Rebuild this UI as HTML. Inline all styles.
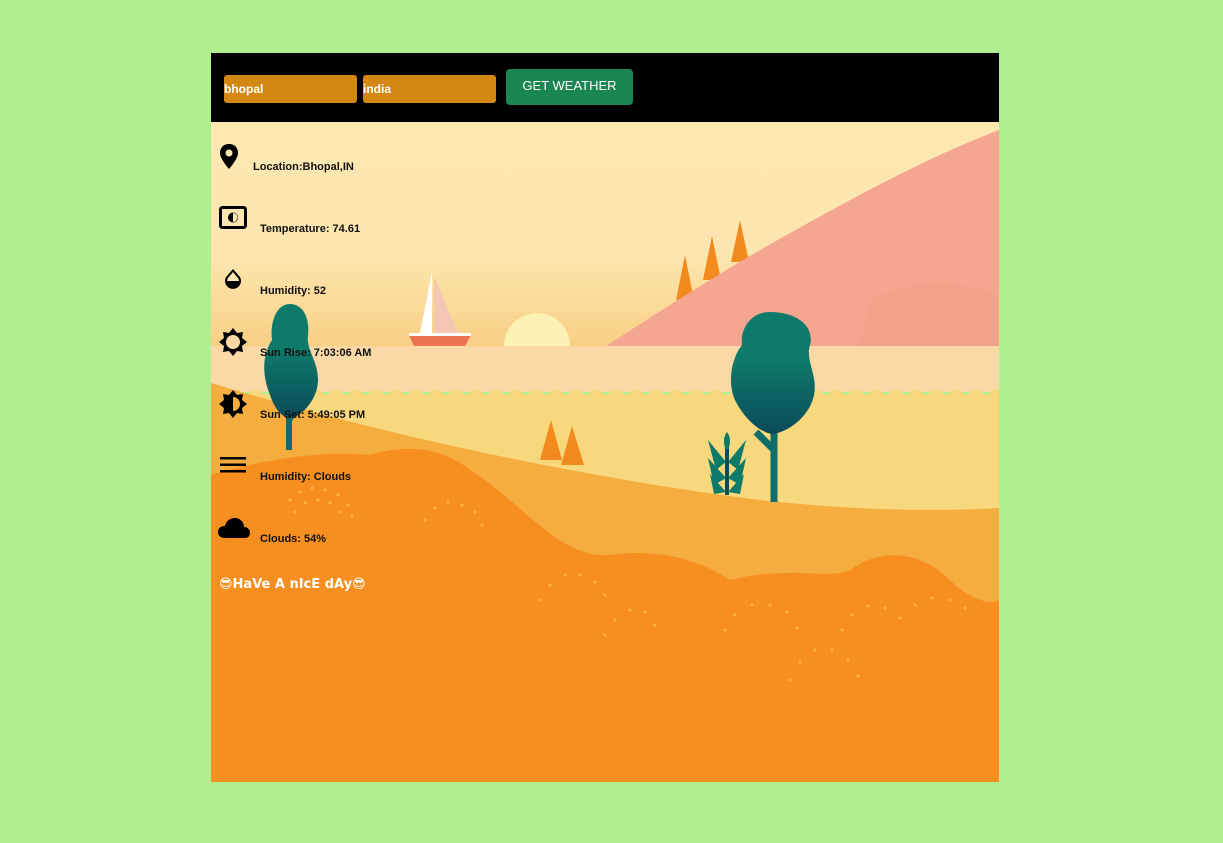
<!DOCTYPE html>
<html><head><style>
body{margin:0;background:#b0ee90;width:1223px;height:843px;overflow:hidden;font-family:"Liberation Sans",sans-serif}
#c{position:absolute;left:211px;top:53px;width:788px;height:729px;overflow:hidden}
#h{position:absolute;left:0;top:0;width:788px;height:69px;background:#000}
.in{position:absolute;top:22px;width:133px;height:28px;background:#d48812;border-radius:3px;color:#fff;font-weight:bold;font-size:12px;line-height:28px}
#btn{position:absolute;left:295px;top:16px;width:127px;height:36px;background:#1a8752;border-radius:4px;color:#fff;font-size:13px;text-align:center;line-height:34px}
svg.bg{position:absolute;left:0;top:69px}
.t{position:absolute;font-size:11px;font-weight:bold;color:#111;white-space:nowrap}
.ic{position:absolute}
#nice{position:absolute;left:8px;top:524px;color:#fff;font-weight:bold;font-size:13px;font-family:"DejaVu Sans",sans-serif;white-space:nowrap}
</style></head><body>
<div id="c">
<div id="h">
<div class="in" style="left:13px">bhopal</div>
<div class="in" style="left:152px">india</div>
<div id="btn">GET WEATHER</div>
</div>
<svg class="bg" width="788" height="660" viewBox="211 122 788 660">
<defs>
<linearGradient id="sky" x1="0" y1="0" x2="0" y2="1"><stop offset="0" stop-color="#fde8b2"/><stop offset="0.6" stop-color="#fde6ae"/><stop offset="1" stop-color="#f9cf85"/></linearGradient>
<linearGradient id="tr" x1="0" y1="0" x2="0" y2="1"><stop offset="0.4" stop-color="#0e7a6a"/><stop offset="1" stop-color="#0b4a5a"/></linearGradient>
</defs>
<rect x="211" y="122" width="788" height="224" fill="url(#sky)"/>
<path d="M676 300 L685 255 L694 300 Z M703 280 L712 236 L721 280 Z M731 262 L740 220 L749 262Z" fill="#f28a1e"/>
<path d="M606 346 C650 318 700 285 760 250 C840 205 920 160 999 130 L999 346 Z" fill="#f4a690"/>
<path d="M870 300 Q930 270 999 295 L999 346 L860 346 Z" fill="#f3a086" opacity=".5"/>
<circle cx="537" cy="346" r="33" fill="#fcf2b6"/>
<rect x="211" y="346" width="788" height="46" fill="#fbd9a6"/>
<path d="M211 392 Q216 387 221 392 T231 392 T241 392 T251 392 T261 392 T271 392 T281 392 T291 392 T301 392 T311 392 T321 392 T331 392 T341 392 T351 392 T361 392 T371 392 T381 392 T391 392 T401 392 T411 392 T421 392 T431 392 T441 392 T451 392 T461 392 T471 392 T481 392 T491 392 T501 392 T511 392 T521 392 T531 392 T541 392 T551 392 T561 392 T571 392 T581 392 T591 392 T601 392 T611 392 T621 392 T631 392 T641 392 T651 392 T661 392 T671 392 T681 392 T691 392 T701 392 T711 392 T721 392 T731 392 T741 392 T751 392 T761 392 T771 392 T781 392 T791 392 T801 392 T811 392 T821 392 T831 392 T841 392 T851 392 T861 392 T871 392 T881 392 T891 392 T901 392 T911 392 T921 392 T931 392 T941 392 T951 392 T961 392 T971 392 T981 392 T991 392 T1001 392 L999 782 L211 782Z" fill="#f8d87c"/>
<path d="M420 333 L432 272 L432 333Z" fill="#fff"/><path d="M434 333 L434 276 L458 333Z" fill="#f6c6b4"/>
<path d="M409 335 L471 335 L465 346 L414 346Z" fill="#ee7352"/><rect x="409" y="333" width="62" height="3" fill="#fff"/>
<path d="M211 383 C400 440 600 480 760 500 C850 510 930 512 999 508 L999 782 L211 782Z" fill="#f6ad40"/>
<path d="M540 460 L551 420 L562 460Z M561 465 L572 426 L584 465Z" fill="#f28a1e"/>
<path d="M211 475 C260 460 320 450 370 455 C400 445 440 445 470 470 C520 500 560 560 610 555 C660 548 700 560 730 580 C790 565 830 580 850 570 C880 548 920 550 950 580 C970 600 990 605 999 600 L999 782 L211 782Z" fill="#f68f1f"/>
<path d="M289 450 L289 380 M289 420 L301 402" stroke="#0f6d6a" stroke-width="6"/>
<path d="M290 304 C275 304 270 325 272 340 C262 355 262 375 270 395 C275 410 283 418 290 418 C300 418 318 400 318 380 C318 360 306 350 308 335 C310 318 303 304 290 304Z" fill="url(#tr)"/>
<path d="M774 502 L774 400 M774 450 L756 432" stroke="#0f6d6a" stroke-width="7"/>
<path d="M770 312 C750 312 740 330 742 345 C730 360 728 385 735 400 C745 420 760 432 772 434 C790 432 810 415 814 395 C818 375 805 360 810 345 C815 325 795 312 770 312Z" fill="url(#tr)"/>
<path d="M727 495 L727 440" stroke="#0b4a5a" stroke-width="4"/>
<path d="M727 432 C722 438 724 448 727 450 C730 448 732 438 727 432Z M708 440 L726 462 L716 470Z M746 440 L728 462 L738 470Z M708 458 L726 478 L714 485Z M746 458 L728 478 L740 485Z M710 474 L726 492 L714 494Z M744 474 L728 492 L740 494Z" fill="#0e7a6a"/>
<g fill="#fbb84a" opacity=".9">
<circle cx="290" cy="500" r="1.5"/><circle cx="300" cy="492" r="1.5"/><circle cx="312" cy="488" r="1.5"/><circle cx="325" cy="490" r="1.5"/><circle cx="338" cy="495" r="1.5"/><circle cx="348" cy="505" r="1.5"/><circle cx="352" cy="516" r="1.5"/>
<circle cx="295" cy="512" r="1.5"/><circle cx="305" cy="503" r="1.5"/><circle cx="318" cy="500" r="1.5"/><circle cx="330" cy="503" r="1.5"/><circle cx="340" cy="512" r="1.5"/>
<circle cx="425" cy="520" r="1.5"/><circle cx="435" cy="508" r="1.5"/><circle cx="448" cy="502" r="1.5"/><circle cx="462" cy="505" r="1.5"/><circle cx="475" cy="512" r="1.5"/><circle cx="482" cy="525" r="1.5"/>
<circle cx="540" cy="600" r="1.5"/><circle cx="550" cy="585" r="1.5"/><circle cx="565" cy="575" r="1.5"/><circle cx="580" cy="575" r="1.5"/><circle cx="595" cy="582" r="1.5"/><circle cx="605" cy="595" r="1.5"/>
<circle cx="605" cy="635" r="1.5"/><circle cx="615" cy="620" r="1.5"/><circle cx="630" cy="610" r="1.5"/><circle cx="645" cy="612" r="1.5"/><circle cx="655" cy="625" r="1.5"/>
<circle cx="725" cy="630" r="1.5"/><circle cx="735" cy="615" r="1.5"/><circle cx="752" cy="605" r="1.5"/><circle cx="770" cy="605" r="1.5"/><circle cx="787" cy="612" r="1.5"/><circle cx="797" cy="628" r="1.5"/>
<circle cx="790" cy="680" r="1.5"/><circle cx="800" cy="662" r="1.5"/><circle cx="815" cy="650" r="1.5"/><circle cx="832" cy="650" r="1.5"/><circle cx="848" cy="660" r="1.5"/><circle cx="858" cy="676" r="1.5"/>
<circle cx="842" cy="630" r="1.5"/><circle cx="852" cy="615" r="1.5"/><circle cx="868" cy="606" r="1.5"/><circle cx="885" cy="608" r="1.5"/><circle cx="900" cy="618" r="1.5"/>
<circle cx="915" cy="605" r="1.5"/><circle cx="932" cy="598" r="1.5"/><circle cx="950" cy="600" r="1.5"/><circle cx="965" cy="608" r="1.5"/>
</g>
</svg>
<div style="position:absolute;left:8px;top:90px;width:20px;height:28px" class="ic"><svg width="20" height="28" viewBox="0 0 20 28"><path d="M10 1 C4 1 1 5 1 10 C1 16 10 26 10 26 C10 26 19 16 19 10 C19 5 16 1 10 1Z" fill="#000"/><circle cx="10" cy="10" r="3.5" fill="#fde8b2"/></svg></div>
<div class="t" style="left:42px;top:108px">Location:Bhopal,IN</div>
<div class="ic" style="left:8px;top:153px"><svg width="28" height="24"><rect x="1.5" y="1.5" width="25" height="20" rx="2" fill="none" stroke="#000" stroke-width="3"/><circle cx="14" cy="11.5" r="5" fill="#000"/><path d="M14 7 A4.5 4.5 0 0 1 14 16Z" fill="#fde8b2"/></svg></div>
<div class="t" style="left:49px;top:170px">Temperature: 74.61</div>
<div class="ic" style="left:11px;top:214px"><svg width="22" height="26"><path d="M11 2 L4 10 A8 8 0 1 0 18 10Z" fill="#000"/><path d="M11 5 L6 11 A6 6 0 0 0 5 14 L17 14 A6 6 0 0 0 16 11Z" fill="#fde8b2"/></svg></div>
<div class="t" style="left:49px;top:232px">Humidity: 52</div>
<div class="ic" style="left:7px;top:274px"><svg width="30" height="30" viewBox="0 0 30 30"><path d="M15 1 L19 6 L25 5 L24 11 L29 15 L24 19 L25 25 L19 24 L15 29 L11 24 L5 25 L6 19 L1 15 L6 11 L5 5 L11 6Z" fill="#000"/><circle cx="15" cy="15" r="7" fill="#fbd9a6"/></svg></div>
<div class="t" style="left:49px;top:294px">Sun Rise: 7:03:06 AM</div>
<div class="ic" style="left:7px;top:336px"><svg width="30" height="30" viewBox="0 0 30 30"><path d="M15 1 L19 6 L25 5 L24 11 L29 15 L24 19 L25 25 L19 24 L15 29 L11 24 L5 25 L6 19 L1 15 L6 11 L5 5 L11 6Z" fill="#000"/><path d="M15 8 A7 7 0 0 1 15 22Z" fill="#f6ad40"/></svg></div>
<div class="t" style="left:49px;top:356px">Sun Set: 5:49:05 PM</div>
<div class="ic" style="left:9px;top:403px"><svg width="26" height="18"><rect x="0" y="1" width="26" height="2.5" fill="#000"/><rect x="0" y="7.5" width="26" height="2.5" fill="#000"/><rect x="0" y="14" width="26" height="2.5" fill="#000"/></svg></div>
<div class="t" style="left:49px;top:418px">Humidity: Clouds</div>
<div class="ic" style="left:7px;top:464px"><svg width="32" height="22"><path d="M7 21 C2 21 0 18 0 15 C0 11 3 9 7 9 C8 4 12 1 17 1 C22 1 26 5 26 10 C30 10 32 13 32 16 C32 19 30 21 27 21Z" fill="#000"/></svg></div>
<div class="t" style="left:49px;top:480px">Clouds: 54%</div>
<div id="nice">😎HaVe A nIcE dAy😎</div>
</div>
</body></html>
